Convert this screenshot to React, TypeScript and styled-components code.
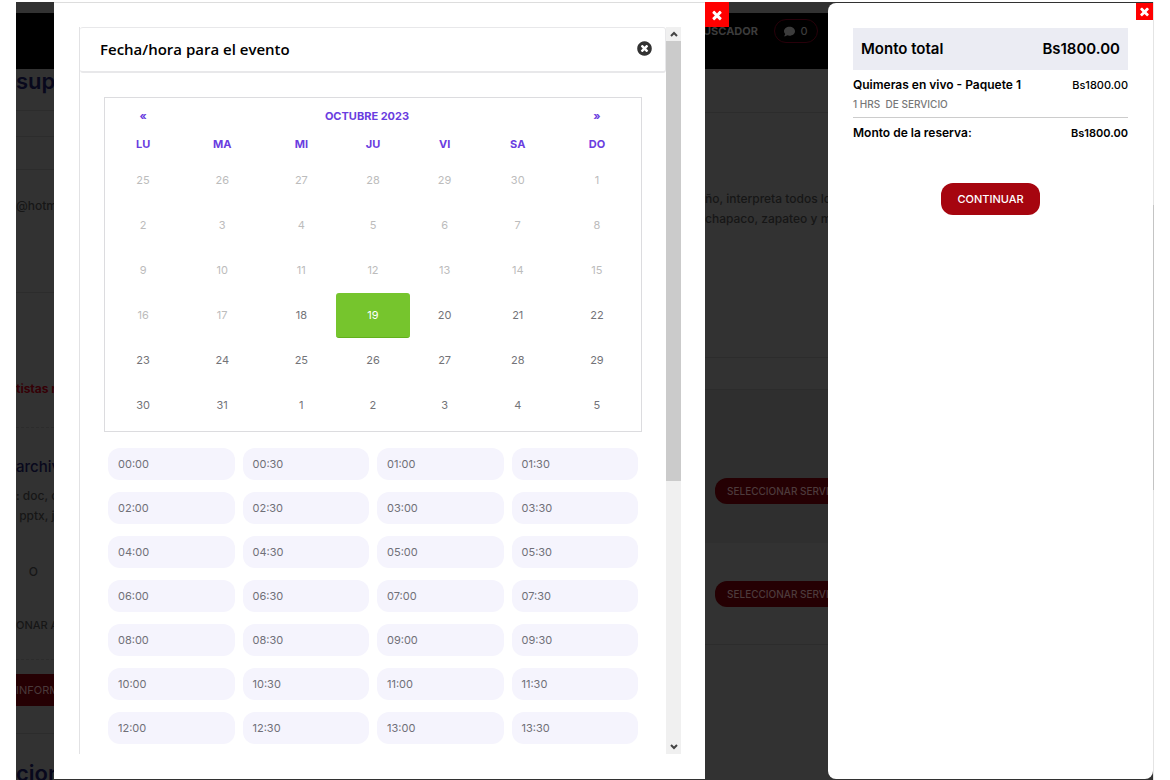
import React, { useState } from "react";
import styled, { createGlobalStyle, css } from "styled-components";
import { FaComment } from "react-icons/fa";

const GlobalStyle = createGlobalStyle`
  *, *::before, *::after { box-sizing: border-box; }
  body {
    margin: 0;
    background: #fff;
    color: #000;
    font: 500 11px/20px Inter, "Liberation Sans", sans-serif;
  }
  button { font: inherit; border: 0; padding: 0; cursor: pointer; }
  h1, h2, h3, p { margin: 0; font-weight: inherit; }
`;

const columns = "38px minmax(0, 1fr) 123px 325px";

const Page = styled.div`
  min-height: 100vh;
  padding: 2px 16px 0;
  display: flex;
`;

const Stage = styled.div`
  position: relative;
  flex: 1;
  display: flex;
  background: #323232;
`;

/* Dimmed page that sits under the dialogs */
const Backdrop = styled.div`
  position: absolute;
  inset: 0;
  overflow: hidden;
  background: #323232;
  color: #161616;
  padding-top: 11px;
`;

const SiteHeader = styled.header`
  height: 56px;
  background: #000;
  display: grid;
  grid-template-columns: ${columns};
`;

const SiteNav = styled.nav`
  grid-column: 3;
  display: flex;
  align-items: center;
  justify-content: flex-end;
  gap: 16px;
  height: 36px;
  padding-right: 10px;
  overflow: hidden;
`;

const NavLink = styled.a`
  color: #3c3c3c;
  font-weight: 700;
  text-decoration: none;
`;

const CommentPill = styled.button`
  flex: none;
  width: 44px;
  height: 24px;
  display: flex;
  align-items: center;
  justify-content: center;
  gap: 5px;
  background: transparent;
  border: 1px solid #28000a;
  border-radius: 12px;
  color: #3c3c3c;
`;

const SiteBody = styled.div`
  display: grid;
  grid-template-columns: ${columns};
`;

const SideColumn = styled.div`
  grid-column: 1;
  overflow: hidden;
  white-space: nowrap;
  font-size: 12px;
`;

const MainColumn = styled.div`
  grid-column: 3;
  overflow: hidden;
  white-space: nowrap;
  font-size: 12px;
`;

const Block = styled.section<{ $top?: number; $bottom?: number; $rule?: "solid" | "dashed"; $band?: boolean }>`
  padding: ${({ $top = 0, $bottom = 0 }) => `${$top}px 0 ${$bottom}px`};
  border-bottom: ${({ $rule }) => ($rule ? `1px ${$rule} #2c2c2c` : "0")};
  background: ${({ $band }) => ($band ? "#2f2f2f" : "transparent")};
`;

const DimTitle = styled.h2<{ $large?: boolean }>`
  color: #08081c;
  line-height: 24px;
  font-size: ${({ $large }) => ($large ? 22 : 15)}px;
  font-weight: ${({ $large }) => ($large ? 600 : 500)};
`;

const DimAlert = styled.p`
  color: #350006;
  font-weight: 700;
`;

const DimLabel = styled.p`
  font-size: 11px;
`;

const DimBar = styled.button`
  display: block;
  width: 100%;
  height: 32px;
  overflow: hidden;
  background: #250003;
  color: #4a3a3b;
  font-size: 11px;
  font-weight: 400;
  text-align: left;
`;

const DimPill = styled.button`
  display: block;
  width: 140px;
  height: 26px;
  margin-left: 10px;
  padding-left: 12px;
  background: #250003;
  color: #4d3b3c;
  border-radius: 12px;
  font-size: 10px;
  text-align: left;
`;

const Overlay = styled.div`
  position: relative;
  flex: 1;
  display: grid;
  grid-template-columns: ${columns};
  padding-bottom: 1px;
`;

const Dialog = styled.section`
  grid-column: 2;
  display: flex;
  position: relative;
  padding: 24px 24px 25px 25px;
  background: #fff;
  border-top: 1px solid #ddd;
`;

const CloseTab = styled.button<{ $small?: boolean }>`
  position: absolute;
  display: flex;
  align-items: center;
  justify-content: center;
  background: #f00;
  color: #fff;
  ${({ $small }) =>
    $small
      ? css`top: 0; right: 0; width: 17px; height: 17px; font-size: 13px;`
      : css`top: -1px; left: 100%; width: 24px; height: 25px; font-size: 14px;`}
`;

const Frame = styled.div`
  flex: 1;
  min-width: 0;
  border-left: 1px solid #e2e2e4;
`;

const FrameHeader = styled.header`
  height: 46px;
  display: flex;
  align-items: center;
  justify-content: space-between;
  padding: 0 12px 2px 20px;
  border: 1px solid #e8e8ea;
  border-left: 0;
  border-bottom-width: 2px;
  border-radius: 3px;
`;

const FrameTitle = styled.h1`
  font: 600 15px/24px "Open Sans", sans-serif;
`;

const RoundClose = styled.button`
  display: flex;
  background: transparent;
  color: #333;
  font-size: 17px;
`;

const FrameBody = styled.div`
  padding: 24px 24px 10px;
`;

const CalendarBox = styled.div`
  border: 1px solid #dcdcdf;
  padding: 4px 3px 3px;
`;

const CalendarTable = styled.table`
  width: 100%;
  table-layout: fixed;
  border-collapse: collapse;
  text-align: center;
  th, td { padding: 0; }
  th { height: 28px; color: #6a3de0; font-weight: 700; }
  td { height: 45px; }
`;

const MonthArrow = styled.button`
  background: transparent;
  color: inherit;
  font-weight: 700;
`;

type DayTone = "off" | "on" | "picked";

const DayButton = styled.button<{ $tone: DayTone }>`
  display: block;
  width: 100%;
  height: 45px;
  border-radius: 3px;
  font-weight: 400;
  background: ${({ $tone }) => ($tone === "picked" ? "#76c52d" : "transparent")};
  border-bottom: 1px solid ${({ $tone }) => ($tone === "picked" ? "#62b01c" : "transparent")};
  color: ${({ $tone }) => ({ off: "#bcbcbc", on: "#737378", picked: "#fff" })[$tone]};
`;

const SlotGrid = styled.div`
  display: grid;
  grid-template-columns: repeat(4, minmax(0, 1fr));
  gap: 12px 8px;
  padding: 16px 4px 0;
`;

const Slot = styled.button`
  height: 32px;
  padding-left: 10px;
  border-radius: 12px;
  background: #f5f4fd;
  color: #707078;
  font-weight: 400;
  text-align: left;
`;

const ScrollTrack = styled.div`
  flex: none;
  width: 15px;
  display: flex;
  flex-direction: column;
  background: #f0f0f0;
`;

const ScrollArrow = styled.button`
  height: 14px;
  display: flex;
  align-items: center;
  justify-content: center;
  background: transparent;
`;

const ScrollRail = styled.div`
  flex: 1;
`;

const ScrollThumb = styled.div`
  height: 63%;
  background: #cbcbcb;
`;

const Summary = styled.aside`
  grid-column: 4;
  position: relative;
  padding: 25px;
  margin-top: 1px;
  background: #fff;
  border-radius: 8px 0 8px 8px;
`;

/* Page scrollbar seen at the right edge of the window */
const PageRail = styled.div`
  flex: none;
  width: 1px;
  padding-top: 203px;
  background: #e4e4e4;
`;

const PageRailThumb = styled.div`
  height: 285px;
  background: #c4c4c4;
`;

const TotalBar = styled.div`
  height: 42px;
  display: flex;
  align-items: center;
  justify-content: space-between;
  padding: 0 8px;
  background: #ebecf3;
  font-size: 15px;
  font-weight: 600;
`;

const LineItem = styled.div`
  padding: 5px 0 4px;
  border-bottom: 1px solid #ccc;
`;

const AmountRow = styled.div<{ $strong?: boolean }>`
  display: flex;
  justify-content: space-between;
  font-weight: ${({ $strong }) => ($strong ? 600 : 500)};
`;

const ItemName = styled.strong`
  font-size: 12px;
  font-weight: 600;
`;

const ItemNote = styled.p`
  font-size: 10px;
  line-height: 18px;
  color: #777;
`;

const Reserve = styled.div`
  padding: 5px 0 40px;
`;

const ContinueButton = styled.button`
  display: block;
  height: 32px;
  margin: 0 auto;
  padding: 0 16px;
  border-radius: 12px;
  background: #a6050f;
  color: #fff;
`;

const weekdays = ["LU", "MA", "MI", "JU", "VI", "SA", "DO"];
const columnWidths = [70, 88, 70, 73, 70, 76, 82];
const weeks = [
  [25, 26, 27, 28, 29, 30, 1],
  [2, 3, 4, 5, 6, 7, 8],
  [9, 10, 11, 12, 13, 14, 15],
  [16, 17, 18, 19, 20, 21, 22],
  [23, 24, 25, 26, 27, 28, 29],
  [30, 31, 1, 2, 3, 4, 5],
];
const firstOpenDay = 23;
const slots = Array.from({ length: 28 }, (_, i) => `${String(i >> 1).padStart(2, "0")}:${i % 2 ? "30" : "00"}`);

function CrossIcon() {
  return (
    <svg width="1em" height="1em" viewBox="0 0 1792 1792" fill="currentColor">
      <path d="M1490 1322q0 40-28 68l-136 136q-28 28-68 28t-68-28l-294-294-294 294q-28 28-68 28t-68-28l-136-136q-28-28-28-68t28-68l294-294-294-294q-28-28-28-68t28-68l136-136q28-28 68-28t68 28l294 294 294-294q28-28 68-28t68 28l136 136q28 28 28 68t-28 68l-294 294 294 294q28 28 28 68z" />
    </svg>
  );
}

function CrossCircleIcon() {
  return (
    <svg width="1em" height="1em" viewBox="0 0 1792 1792" fill="currentColor">
      <path d="M1277 1122q0-26-19-45l-181-181 181-181q19-19 19-45 0-27-19-46l-90-90q-19-19-46-19-26 0-45 19l-181 181-181-181q-19-19-45-19-27 0-46 19l-90 90q-19 19-19 46 0 26 19 45l181 181-181 181q-19 19-19 45 0 27 19 46l90 90q19 19 46 19 26 0 45-19l181-181 181 181q19 19 45 19 27 0 46-19l90-90q19-19 19-46zm387-226q0 209-103 385.5t-279.5 279.5-385.5 103-385.5-103-279.5-279.5-103-385.5 103-385.5 279.5-279.5 385.5-103 385.5 103 279.5 279.5 103 385.5z" />
    </svg>
  );
}

function Calendar() {
  const [picked, setPicked] = useState(24);
  const tone = (index: number): DayTone => (index === picked ? "picked" : index < firstOpenDay ? "off" : "on");
  return (
    <CalendarBox>
      <CalendarTable>
        <colgroup>
          {columnWidths.map((w, i) => (
            <col key={i} width={w} />
          ))}
        </colgroup>
        <thead>
          <tr>
            <th><MonthArrow aria-label="Mes anterior">«</MonthArrow></th>
            <th colSpan={5}>OCTUBRE 2023</th>
            <th><MonthArrow aria-label="Mes siguiente">»</MonthArrow></th>
          </tr>
          <tr>
            {weekdays.map((d) => (
              <th key={d} scope="col">{d}</th>
            ))}
          </tr>
        </thead>
        <tbody>
          {weeks.map((week, r) => (
            <tr key={r}>
              {week.map((day, c) => (
                <td key={c}>
                  <DayButton
                    $tone={tone(r * 7 + c)}
                    disabled={r * 7 + c < firstOpenDay}
                    onClick={() => setPicked(r * 7 + c)}
                  >
                    {day}
                  </DayButton>
                </td>
              ))}
            </tr>
          ))}
        </tbody>
      </CalendarTable>
    </CalendarBox>
  );
}

function Chevron({ down }: { down?: boolean }) {
  return (
    <svg width="8" height="6" viewBox="0 0 8 6" fill="none" stroke="#444" strokeWidth="2">
      <path d={down ? "M1 1l3 3 3-3" : "M1 5l3-3 3 3"} />
    </svg>
  );
}

function DimmedPage() {
  return (
    <Backdrop>
      <SiteHeader>
        <SiteNav>
          <NavLink href="#buscador">USCADOR</NavLink>
          <CommentPill><FaComment />0</CommentPill>
        </SiteNav>
      </SiteHeader>
      <SiteBody>
        <SideColumn>
          <Block $bottom={17} $rule="solid"><DimTitle $large>sup</DimTitle></Block>
          <Block $top={25} $rule="solid" />
          <Block $top={32} $rule="solid" />
          <Block $top={26} $bottom={76} $rule="solid">@hotm</Block>
          <Block $top={86} $bottom={28} $rule="dashed"><DimAlert>tistas r</DimAlert></Block>
          <Block $top={27} $bottom={36}>
            <DimTitle>archiv</DimTitle>
            <Block $top={7}>: doc, c<br />&nbsp;pptx, j</Block>
          </Block>
          <Block $bottom={33}>&nbsp;&nbsp;&nbsp;&nbsp;O</Block>
          <Block $bottom={24} $rule="dashed"><DimLabel>ONAR A</DimLabel></Block>
          <Block $top={14} $bottom={27} $rule="solid"><DimBar>INFORM</DimBar></Block>
          <Block $top={27}><DimTitle $large>cion</DimTitle></Block>
        </SideColumn>
        <MainColumn>
          <Block $top={43} $rule="solid" />
          <Block $top={76} $bottom={128} $rule="solid">
            ño, interpreta todos lo<br />chapaco, zapateo y m
          </Block>
          <Block $top={31} $rule="solid" />
          <Block $top={88} $bottom={39} $band><DimPill>SELECCIONAR SERVI</DimPill></Block>
          <Block $top={38} $bottom={37} $rule="solid"><DimPill>SELECCIONAR SERVI</DimPill></Block>
        </MainColumn>
      </SiteBody>
    </Backdrop>
  );
}

function DateDialog() {
  return (
    <Dialog role="dialog" aria-labelledby="date-title">
      <CloseTab aria-label="Cerrar"><CrossIcon /></CloseTab>
      <Frame>
        <FrameHeader>
          <FrameTitle id="date-title">Fecha/hora para el evento</FrameTitle>
          <RoundClose aria-label="Quitar"><CrossCircleIcon /></RoundClose>
        </FrameHeader>
        <FrameBody>
          <Calendar />
          <SlotGrid>
            {slots.map((s) => (
              <Slot key={s}>{s}</Slot>
            ))}
          </SlotGrid>
        </FrameBody>
      </Frame>
      <ScrollTrack>
        <ScrollArrow aria-label="Subir"><Chevron /></ScrollArrow>
        <ScrollRail><ScrollThumb /></ScrollRail>
        <ScrollArrow aria-label="Bajar"><Chevron down /></ScrollArrow>
      </ScrollTrack>
    </Dialog>
  );
}

function OrderSummary() {
  return (
    <Summary>
      <CloseTab $small aria-label="Cerrar resumen"><CrossIcon /></CloseTab>
      <TotalBar><span>Monto total</span><span>Bs1800.00</span></TotalBar>
      <LineItem>
        <AmountRow><ItemName>Quimeras en vivo - Paquete 1</ItemName><span>Bs1800.00</span></AmountRow>
        <ItemNote>1 HRS&nbsp; DE SERVICIO</ItemNote>
      </LineItem>
      <Reserve>
        <AmountRow $strong><ItemName>Monto de la reserva:</ItemName><span>Bs1800.00</span></AmountRow>
      </Reserve>
      <ContinueButton>CONTINUAR</ContinueButton>
    </Summary>
  );
}

export default function App() {
  return (
    <Page>
      <GlobalStyle />
      <Stage>
        <DimmedPage />
        <Overlay>
          <DateDialog />
          <OrderSummary />
        </Overlay>
      </Stage>
      <PageRail><PageRailThumb /></PageRail>
    </Page>
  );
}
